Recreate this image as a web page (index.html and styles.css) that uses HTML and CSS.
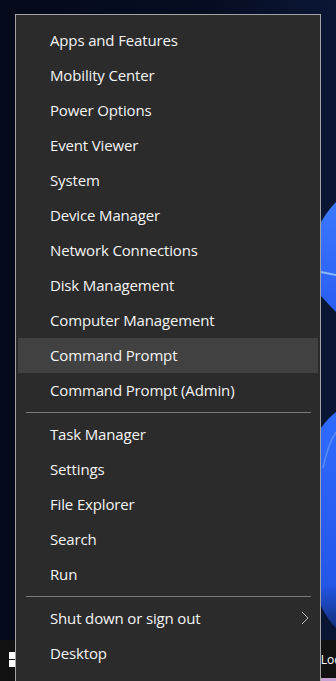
FILE: index.html
```html
<!DOCTYPE html>
<html lang="en">
<head>
  <meta charset="UTF-8">
  <title>Quick Link Menu</title>
  <link rel="stylesheet" href="styles.css">
</head>
<body>
  <div class="desktop">
    <!-- wallpaper bloom, only the edge is visible beside the menu -->
    <svg class="wallpaper" viewBox="0 0 336 681" width="336" height="681">
      <defs>
        <linearGradient id="bloomA" x1="0" y1="0" x2="0" y2="1">
          <stop offset="0" stop-color="#3a78ff"/>
          <stop offset="1" stop-color="#2a5ef2"/>
        </linearGradient>
        <linearGradient id="bloomB" x1="0" y1="0" x2="0" y2="1">
          <stop offset="0" stop-color="#2f6bff"/>
          <stop offset="0.8" stop-color="#2456e8"/>
          <stop offset="1" stop-color="#12307c"/>
        </linearGradient>
      </defs>
      <path d="M321 222 Q328 210 336 202 L336 312 Q328 304 321 296 Z" fill="url(#bloomA)"/>
      <path d="M321 272 L336 275" stroke="#8cb8ff" stroke-width="2"/>
      <path d="M321 428 Q328 418 336 412 L336 628 Q328 620 321 606 Z" fill="url(#bloomB)"/>
      <path d="M323 468 Q328 444 336 432" stroke="#5a8cff" stroke-width="1.5" fill="none"/>
    </svg>

    <div class="taskbar">
      <div class="start-logo">
        <span></span><span></span><span></span><span></span>
      </div>
      <span class="tray-text">Loc</span>
    </div>
    <div class="taskbar-edge"></div>
  </div>

  <div class="menu">
    <div class="item">Apps and Features</div>
    <div class="item">Mobility Center</div>
    <div class="item">Power Options</div>
    <div class="item">Event Viewer</div>
    <div class="item">System</div>
    <div class="item">Device Manager</div>
    <div class="item">Network Connections</div>
    <div class="item">Disk Management</div>
    <div class="item">Computer Management</div>
    <div class="item hover">Command Prompt</div>
    <div class="item">Command Prompt (Admin)</div>
    <div class="sep"></div>
    <div class="item">Task Manager</div>
    <div class="item">Settings</div>
    <div class="item">File Explorer</div>
    <div class="item">Search</div>
    <div class="item">Run</div>
    <div class="sep"></div>
    <div class="item sub">
      Shut down or sign out
      <svg class="chevron" viewBox="0 0 8 14" width="8" height="14">
        <polyline points="1,1 7,7 1,13" fill="none" stroke="#b5b5b5" stroke-width="1"/>
      </svg>
    </div>
    <div class="item">Desktop</div>
  </div>
</body>
</html>
```

FILE: styles.css
```css
body {
  margin: 0;
  width: 336px;
  height: 681px;
  overflow: hidden;
  position: relative;
  background: #050b1d;
  font-family: "Open Sans", "Noto Sans", sans-serif;
}
.desktop {
  width: 336px;
  height: 681px;
  display: flex;
  flex-direction: column;
  justify-content: flex-end;
  background: linear-gradient(90deg, #040a1a 0, #060d22 60%, #0a1634 100%);
}
.wallpaper {
  position: absolute;
  top: 0;
  left: 0;
}
.taskbar {
  position: relative;
  height: 38px;
  background: #121212;
  display: flex;
  align-items: center;
  justify-content: space-between;
  padding: 0 0 0 9px;
}
.start-logo {
  display: grid;
  grid-template-columns: 7px 7px;
  grid-template-rows: 7px 7px;
  gap: 1px;
}
.start-logo span {
  background: #fff;
}
.tray-text {
  color: #fff;
  font-size: 12px;
  font-family: "Open Sans", sans-serif;
  margin-right: -4px;
}
.taskbar-edge {
  height: 3px;
  background: linear-gradient(90deg, #121212 0, #121212 97px, #c7a3d3 97px);
}
.menu {
  position: absolute;
  left: 15px;
  top: 14px;
  width: 304px;
  height: 664px;
  padding: 8px 0 0;
  background: #2b2b2b;
  border: 1px solid #a3a3a3;
  box-sizing: content-box;
}
.item {
  height: 35px;
  box-sizing: border-box;
  margin: 0 2px;
  padding: 0 0 2px 32px;
  display: flex;
  align-items: center;
  color: #f4f4f4;
  font-size: 15px;
  letter-spacing: -0.15px;
}
.item.hover {
  background: #414141;
}
.item.sub {
  justify-content: space-between;
  padding-right: 9px;
}
.chevron {
  margin-top: 1px;
}
.sep {
  height: 9px;
  display: flex;
  align-items: center;
  margin: 0 9px 0 10px;
}
.sep::before {
  content: "";
  flex: 1;
  height: 1px;
  background: #7a7a7a;
}
```
